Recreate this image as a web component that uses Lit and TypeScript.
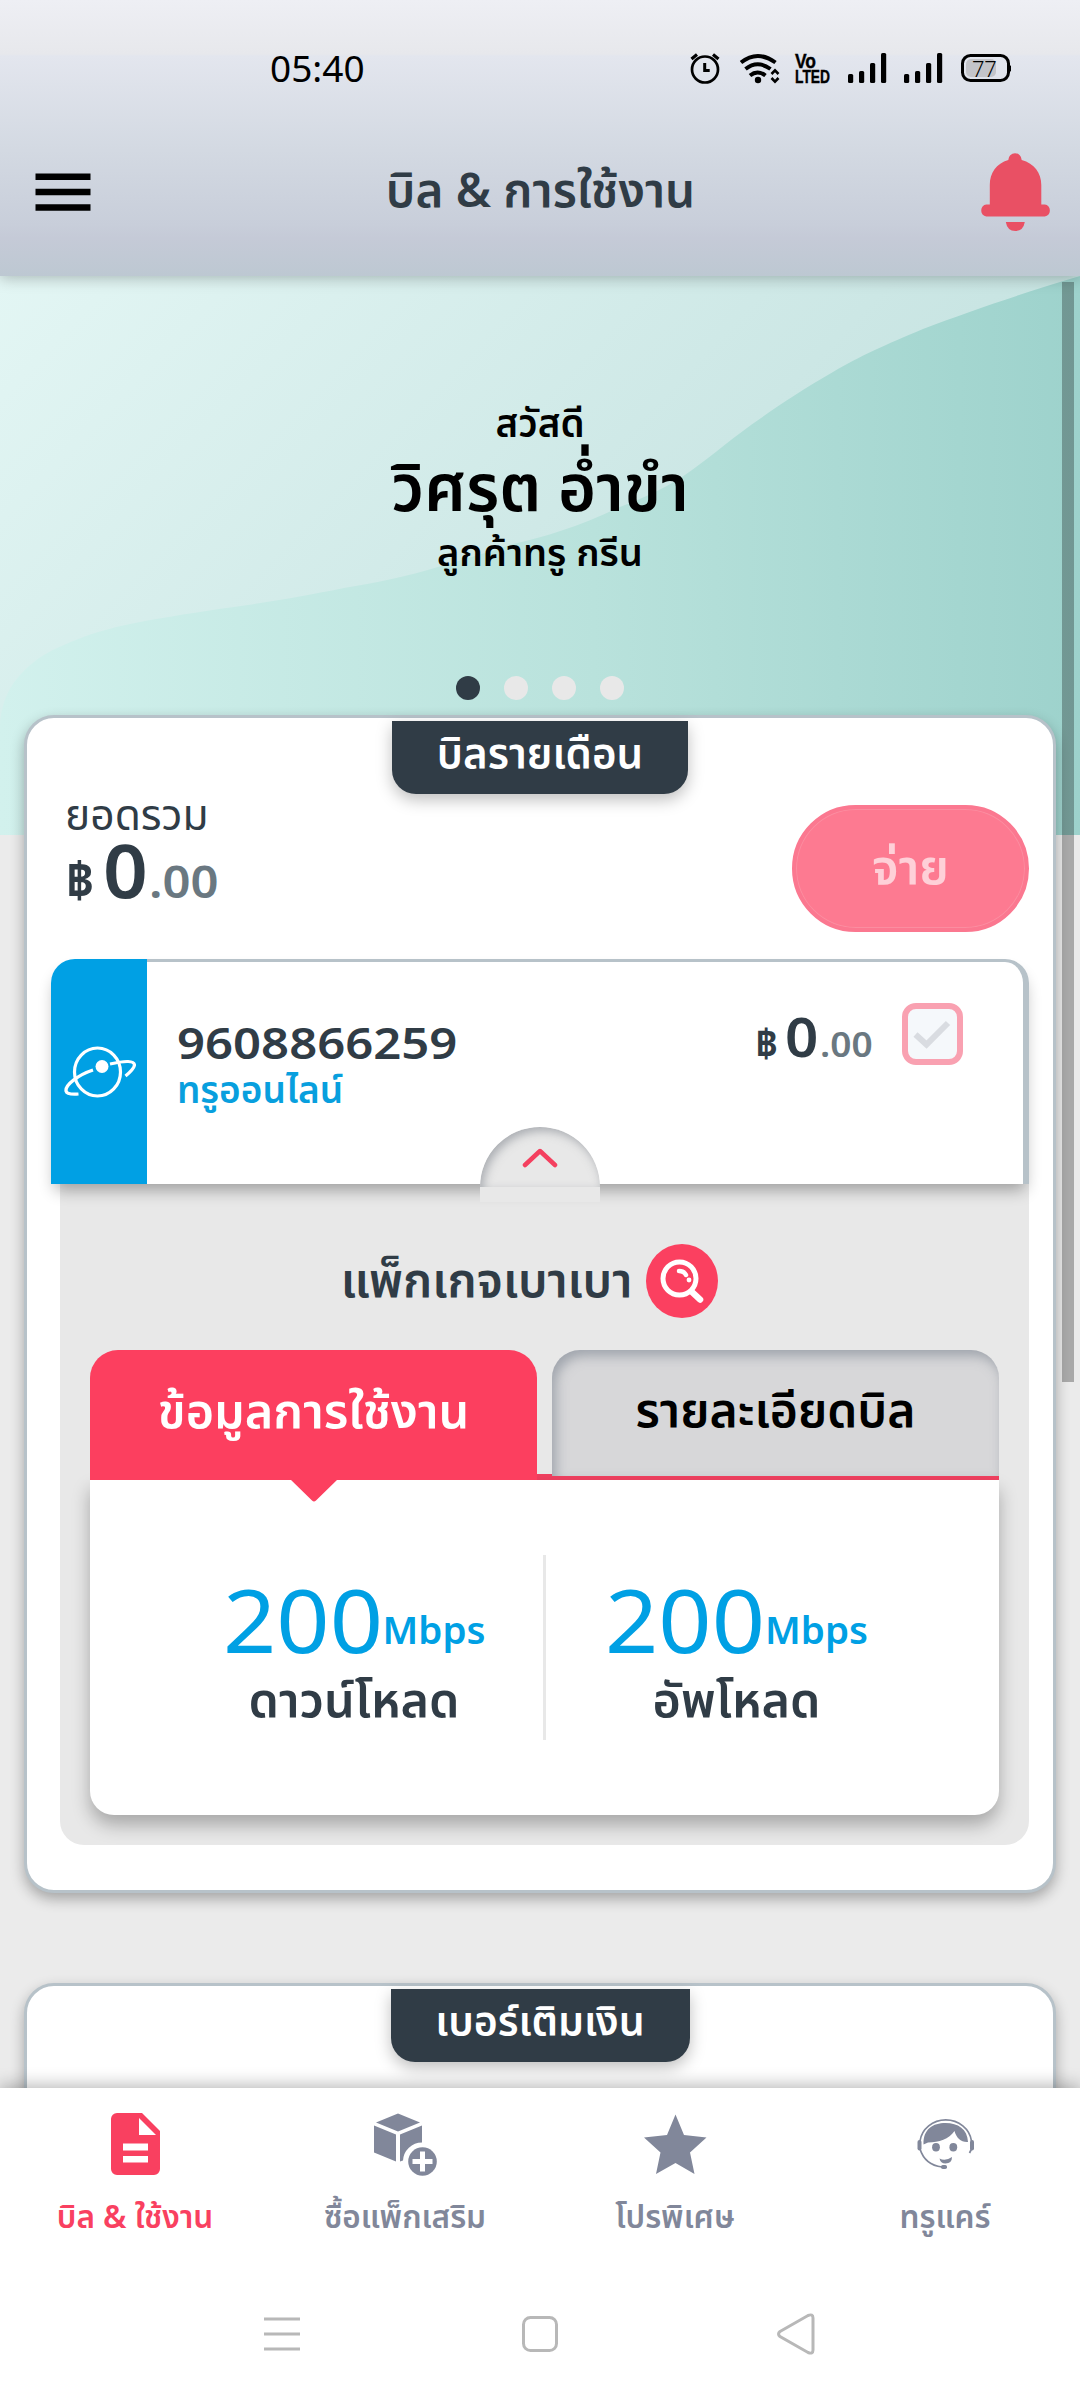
import { LitElement, html, css, svg } from "lit";
import { customElement, property } from "lit/decorators.js";
import { classMap } from "lit/directives/class-map.js";

const NAV = [
  { icon: "bill", label: "บิล & ใช้งาน" },
  { icon: "box", label: "ซื้อแพ็กเสริม" },
  { icon: "star", label: "โปรพิเศษ" },
  { icon: "care", label: "ทรูแคร์" },
];

const SPEEDS = [
  { value: "200", unit: "Mbps", label: "ดาวน์โหลด" },
  { value: "200", unit: "Mbps", label: "อัพโหลด" },
];

const ICONS: Record<string, unknown> = {
  bill: svg`<path fill="currentColor" fill-rule="evenodd" d="M14 1h25l18 18v38a6 6 0 0 1-6 6H14a6 6 0 0 1-6-6V7a6 6 0 0 1 6-6zM36 6v17h17zM20 31.500v7h25v-7zM20 44v6.500h25V44z"/>`,
  box: svg`<g fill="currentColor"><path d="M25 1.500 47 10.500 25 19.500 3 10.500z"/><path d="M1 13.500 23 22.500V49.500L1 40.500z"/><path d="M27 22.500 49 13.500V30.500A19 19 0 0 0 30 48.500L27 49.500z"/><circle cx="49.500" cy="49.500" r="14.300"/></g><path d="M49.500 39.500v20M39.500 49.500h20" stroke="#fff" stroke-width="5"/>`,
  star: svg`<path fill="currentColor" d="M32.500 2.500 41 23 63.500 25.500 47 40.500 51.500 62 32.500 51 13 62 17.500 40.500 1 25.500 24 23z"/>`,
  care: svg`<g fill="currentColor"><path d="M10.500 32.500C10 17 20 11 32.500 11S54.500 17 55 30C48 30.500 43.500 26 41.500 19 36 27 26 30.500 15 30.500z"/><ellipse cx="23" cy="35.300" rx="3.900" ry="4.200"/><ellipse cx="40.300" cy="35.300" rx="3.900" ry="4.200"/><path d="M26.500 46.500q6 3 12.500-1.500 0 6.500-6.500 6.500-5 0-6-5z"/><rect x="4.500" y="28" width="4" height="10.500" rx="2"/><rect x="57" y="28" width="4" height="10.500" rx="2"/><rect x="28" y="53" width="6" height="4" rx="1.800"/></g><path d="M58.500 29A26 24.500 0 0 0 7 29M7 37Q12 53 29 55M58.500 37l-2 4" fill="none" stroke="currentColor" stroke-width="1.700"/>`,
};

@customElement("section-badge")
class SectionBadge extends LitElement {
  static styles = css`
    :host { display: block; width: 296px; height: 73px; border-radius: 0 0 24px 24px; background: #303c46; color: #fff; font-size: 42px; font-weight: 600; line-height: 62px; white-space: nowrap; text-align: center; box-shadow: 0 6px 16px rgba(0, 0, 0, 0.25); }
    :host(.wide) { width: 299px; font-size: 41px; }
  `;
  render() {
    return html`<slot></slot>`;
  }
}

@customElement("nav-item")
class NavItem extends LitElement {
  @property() icon = "bill";
  static styles = css`
    :host { display: flex; flex-direction: column; align-items: center; gap: 18px; padding-top: 24px; width: 270px; color: #81879a; font-size: 31.5px; line-height: 44px; font-weight: 600; white-space: nowrap; }
    :host(.active) { color: #f94060; }
    svg { width: 64px; height: 64px; display: block; }
  `;
  render() {
    return html`<svg viewBox="0 0 64 64">${ICONS[this.icon]}</svg><span><slot></slot></span>`;
  }
}

@customElement("app-root")
class AppRoot extends LitElement {
  static styles = css`
    :host { display: flex; flex-direction: column; width: 1080px; height: 2400px; overflow: hidden; background: #fff; color: #303c46; font-family: "Noto Sans", "Noto Sans Thai", "Open Sans", sans-serif; font-weight: 600; }
    * { box-sizing: border-box; }
    svg { display: block; flex: none; }
    .header { height: 276px; position: relative; z-index: 2; flex: none; background: linear-gradient(#eeeff4 0, #e7e8ec 54px, #e3e6ee 56px, #d3d9e2 150px, #c8ceda 225px, #c5cad7 238px, #bdc8d2 276px); box-shadow: 0 2px 14px rgba(0, 0, 0, 0.25); }
    .status { height: 108px; display: flex; align-items: center; padding: 30px 69px 0 270px; }
    .time { flex: 1; color: #000; font-weight: 400; font-size: 37px; line-height: 40px; margin-top: -2px; }
    .bar { height: 168px; display: flex; align-items: center; justify-content: space-between; padding: 0 30px 0 35px; }
    .bar-side { width: 66px; }
    .title { font-size: 47.5px; line-height: 60px; margin-top: -6px; white-space: nowrap; }
    .scroll { position: relative; flex: none; height: 1812px; overflow: hidden; background: #ebebeb; display: flex; flex-direction: column; }
    .hero-bg { position: absolute; left: 0; top: 0; }
    .scrollbar { position: absolute; left: 1062px; top: 6px; width: 12px; height: 1100px; background: rgba(0, 0, 0, 0.28); z-index: 3; }
    .hero { position: relative; height: 439px; padding-top: 118px; display: flex; flex-direction: column; align-items: center; color: #000; white-space: nowrap; flex: none; }
    .hello { font-size: 38.5px; line-height: 56px; }
    .name { font-size: 65px; line-height: 72px; height: 74px; }
    .tier { font-size: 38px; line-height: 55px; }
    .dots { display: flex; gap: 24px; margin-top: 97px; }
    .dot { width: 24px; height: 24px; border-radius: 50%; background: #e8e8e8; }
    .dot.on { background: #303c46; }
    .card { position: relative; flex: none; margin: 0 24px; border: 3px solid #b7c2c9; border-radius: 30px; background: #fff; padding: 3px 24px 45px; box-shadow: 0 6px 14px rgba(0, 0, 0, 0.3); display: flex; flex-direction: column; }
    .card section-badge { align-self: center; }
    .next { margin-top: 90px; height: 400px; }
    .summary { display: flex; justify-content: space-between; height: 165px; padding-left: 14px; }
    .total-label { font-size: 42.5px; line-height: 44px; margin-top: -2px; font-weight: 400; }
    .total { line-height: 67px; white-space: nowrap; display: flex; align-items: baseline; padding-left: 1px; }
    .baht { font-size: 49px; font-weight: 700; }
    .int { font-size: 74px; font-weight: 600; margin-left: 9px; transform: scaleX(1.06); transform-origin: 0 50%; margin-right: 3px; }
    .dec { font-size: 45px; font-weight: 600; color: #6a7881; transform: scaleX(1.09); transform-origin: 0 50%; }
    .pay { width: 237px; height: 127px; margin-top: 11px; border-radius: 64px; background: #fd7a91; color: #fed0d8; border: 4px solid #fb7890; box-shadow: inset 0 0 0 1px #fb8da0; font-size: 48.5px; line-height: 112px; text-align: center; }
    .account { position: relative; z-index: 1; display: flex; height: 225px; background: #fff; border-radius: 24px 24px 0 0; box-shadow: 0 10px 16px -4px rgba(0, 0, 0, 0.32); }
    .brand { width: 96px; background: #00a0e4; border-radius: 24px 0 0 0; display: flex; align-items: center; justify-content: center; padding-left: 2px; }
    .acc-body { flex: 1; display: flex; justify-content: space-between; border-top: 3px solid #b7c2c9; border-right: 6px solid #b7c2c9; border-radius: 0 24px 0 0; padding: 0 60px 0 30px; }
    .acc-text { padding-top: 56px; }
    .number { font-size: 43px; line-height: 50px; transform: scaleX(1.14); transform-origin: 0 50%; }
    .product { font-size: 37px; line-height: 41px; color: #089fde; }
    .acc-pay { display: flex; padding-top: 41px; gap: 31px; }
    .acc-amount { display: flex; align-items: baseline; line-height: 65px; height: 66px; white-space: nowrap; }
    .acc-amount .baht { font-size: 39px; }
    .acc-amount .int { font-size: 55px; margin-left: 7px; }
    .acc-amount .dec { font-size: 34px; margin-right: 3px; }
    .check { width: 61px; height: 62px; border: 6px solid #f9a1b1; border-radius: 14px; background: #f5f8fb; }
    .notch { position: absolute; left: 429px; top: 168px; width: 120px; height: 75px; background: #e8e8e8; border-radius: 60px 60px 0 0; overflow: hidden; }
    .notch-in { height: 60px; border-radius: 60px 60px 0 0; box-shadow: inset 3px 4px 10px rgba(110, 115, 125, 0.5); padding: 19px 0 0 42px; clip-path: inset(0); }
    .panel { height: 661px; margin-left: 9px; background: #e8e8e8; border-radius: 0 0 24px 24px; padding: 60px 30px 0; }
    .pack { display: flex; height: 74px; align-items: center; justify-content: center; gap: 14px; padding-right: 30px; }
    .pack-name { font-size: 47.500px; line-height: 69px; height: 74px; white-space: nowrap; }
    .look { width: 72px; height: 74px; border-radius: 50%; background: #fb4060; }
    .tabs { display: grid; grid-template-columns: 447px 447px; gap: 15px; margin-top: 32px; height: 130px; background: linear-gradient(#f04060, #f04060) bottom / 100% 6px no-repeat; }
    .tab { position: relative; border-radius: 28px 28px 0 0; text-align: center; font-size: 48.5px; line-height: 118px; white-space: nowrap; }
    .tab.on { background: #fc3f5f; color: #fff; }
    .tab.off { height: 126px; background: #d7d7d9; color: #000; font-size: 48px; box-shadow: inset 4px 6px 12px rgba(105, 115, 130, 0.5); clip-path: inset(0); }
    .arrow { position: absolute; left: 200px; top: 129px; z-index: 2; }
    .usage { height: 335px; background: #fff; border-radius: 0 0 24px 24px; box-shadow: 0 10px 18px rgba(0, 0, 0, 0.28); padding: 75px 72px 0 75px; display: grid; grid-template-columns: 1fr 1fr; }
    .speed { height: 185px; padding-top: 19px; text-align: center; white-space: nowrap; }
    .speed:first-child { border-right: 3px solid #e8e8e8; }
    .rate { display: flex; justify-content: center; color: #00a0e4; line-height: 90px; height: 90px; }
    .value { font-size: 88px; font-weight: 400; transform: scaleX(1.06); transform-origin: 0 50%; margin-right: 9px; }
    .unit { font-size: 38.5px; line-height: 111px; }
    .speed-label { font-size: 48.5px; line-height: 68px; }
    .nav { position: relative; z-index: 2; height: 180px; flex: none; background: #fff; display: flex; box-shadow: 0 -3px 16px rgba(0, 0, 0, 0.28); }
    .sys { position: relative; z-index: 3; height: 132px; flex: none; background: #fff; display: flex; align-items: center; justify-content: center; gap: 217px; }
  `;

  private status() {
    return html`<svg width="322" height="36" viewBox="689 52 322 36">
      <g fill="none" stroke="#000">
        <circle cx="705" cy="70.500" r="13" stroke-width="2.700" />
        <path d="M704.700 64v7.600h5" stroke-width="3" />
        <path d="M691.500 60l5.500-4.500M718.500 60l-5.500-4.500" stroke-width="3.200" />
        <path d="M741 63.500Q757.500 50.500 775.500 63.500M745.500 70Q757.500 60.500 770.500 70M750 76.500Q757.500 70.500 765.500 76.500" stroke-width="4" />
        <path d="M771.500 75l3.500-3.700 3.500 3.700M771.500 79l3.500 3.700 3.500-3.700" stroke-width="2.600" />
        <rect x="962.500" y="56.500" width="46" height="25" rx="8" stroke-width="3" />
      </g>
      <circle cx="758" cy="81" r="3.200" />
      <g font-family="Liberation Sans" font-weight="700" fill="#000" stroke="#000" stroke-width=".400">
        <text x="795" y="69" font-size="20" textLength="21" lengthAdjust="spacingAndGlyphs">Vo</text>
        <text x="795" y="84" font-size="19" textLength="35" lengthAdjust="spacingAndGlyphs">LTED</text>
      </g>
      ${[0, 56].map((d) => [[848, 75], [859, 72], [870, 64], [881, 54]].map(([x, y]) => svg`<rect x=${x + d} y=${y} width="5.200" height=${84 - y} rx="1.600"/>`))}
      <rect x="966" y="60" width="30" height="18" rx="5" fill="#c3c4c9" />
      <path d="M1008 64.500l3 2.500v5l-3 2.500z" />
      <text x="984.500" y="77.500" text-anchor="middle" font-family="Roboto" font-size="22" font-weight="300">77</text>
    </svg>`;
  }

  render() {
    return html`
      <div class="header">
        <div class="status"><span class="time">05:40</span>${this.status()}</div>
        <div class="bar">
          <div class="bar-side"><svg width="56" height="40" viewBox="0 0 56 40"><path d="M.500 4.700h55M.500 20h55M.500 35.500h55" stroke="#000" stroke-width="6.500" /></svg></div>
          <div class="title">บิล & การใช้งาน</div>
          <svg width="70" height="80" viewBox="0 0 70 80" fill="#e95064"><path d="M28.300 8a6.700 6.700 0 0 1 13.400 0C54.300 11.500 61.300 21 61.300 33V52.500h3.500a5.500 5.500 0 0 1 5 6 5.500 5.500 0 0 1-5 6H6.300a5.500 5.500 0 0 1-5-6 5.500 5.500 0 0 1 5-6h3.500V33C9.800 21 16.300 11.500 28.300 8zM25.800 70h19q-1.500 9-9.500 9t-9.500-9z" /></svg>
        </div>
      </div>
      <div class="scroll">
        <svg class="hero-bg" width="1080" height="559" viewBox="0 276 1080 559">
          <defs>
            <linearGradient id="a" x1="0" y1="0" x2="1" y2=".5"><stop offset="0" stop-color="#e3f6f4" /><stop offset=".75" stop-color="#c9e5e3" /><stop offset="1" stop-color="#bfe1dc" /></linearGradient>
            <linearGradient id="b"><stop offset="0" stop-color="#d2f1ed" /><stop offset=".55" stop-color="#b9e2dc" /><stop offset="1" stop-color="#9dd2cc" /></linearGradient>
          </defs>
          <path fill="url(#a)" d="M0 276h1080v559H0z" />
          <path fill="url(#b)" d="M1080 276C1020 294 970 311 923 329C885 345 860 356 833 372C800 391 775 408 751 425C725 444 708 459 682 477C660 491 640 499 620 507C580 526 545 537 513 544C490 552 465 559 441 566C405 577 375 583 344 588C310 595 280 600 248 605C210 610 180 615 145 621C118 626 95 632 76 640C58 647 45 653 34 662C18 675 2 692 0 725V835h1080z" />
        </svg>
        <div class="scrollbar"></div>
        <div class="hero">
          <div class="hello">สวัสดี</div>
          <div class="name">วิศรุต อ่ำขำ</div>
          <div class="tier">ลูกค้าทรู กรีน</div>
          <div class="dots">${[0, 1, 2, 3].map((i) => html`<span class=${classMap({ dot: true, on: i === 0 })}></span>`)}</div>
        </div>
        <div class="card">
          <section-badge>บิลรายเดือน</section-badge>
          <div class="summary">
            <div>
              <div class="total-label">ยอดรวม</div>
              <div class="total"><span class="baht">฿</span><span class="int">0</span><span class="dec">.00</span></div>
            </div>
            <div class="pay">จ่าย</div>
          </div>
          <div class="account">
            <div class="brand">
              <svg width="72" height="52" viewBox="0 0 72 52" fill="none" stroke="#fff" stroke-width="3.200"><ellipse cx="33.500" cy="26" rx="23" ry="24" /><path d="M29 24C14 29 1 39 2 45Q3 49 14.500 48M46 18Q70 12.500 70.500 19 70 23 61.500 30" /><circle cx="38" cy="20.500" r="6.500" fill="#fff" stroke="none" /></svg>
            </div>
            <div class="acc-body">
              <div class="acc-text"><div class="number">9608866259</div><div class="product">ทรูออนไลน์</div></div>
              <div class="acc-pay">
                <div class="acc-amount"><span class="baht">฿</span><span class="int">0</span><span class="dec">.00</span></div>
                <div class="check"><svg width="49" height="50" viewBox="0 0 49 50"><path d="M7.500 25.500 18.500 35.500 40 14" fill="none" stroke="#d9dce1" stroke-width="6" /></svg></div>
              </div>
            </div>
            <div class="notch"><div class="notch-in"><svg width="36" height="24" viewBox="0 0 36 24"><path d="M3 19 18 5 33 19" fill="none" stroke="#f4405f" stroke-width="4.500" stroke-linecap="round" stroke-linejoin="round" /></svg></div></div>
          </div>
          <div class="panel">
            <div class="pack"><span class="pack-name">แพ็กเกจเบาเบา</span>
              <svg class="look" viewBox="0 0 72 74" fill="none" stroke="#fff" stroke-linecap="round"><circle cx="33.500" cy="34.500" r="16.500" stroke-width="5" /><path d="M46 48 54 55.500" stroke-width="6.500" /><path d="M33 27Q38 27 40 31" stroke-width="4.500" /><circle cx="43" cy="36" r="2.400" fill="#fff" stroke="none" /></svg>
            </div>
            <div class="tabs">
              <div class="tab on">ข้อมูลการใช้งาน<svg class="arrow" width="48" height="24" viewBox="0 0 48 24"><path d="M0 0h48L26 21.500q-2 2-4 0z" fill="#fc3f5f" /></svg></div>
              <div class="tab off">รายละเอียดบิล</div>
            </div>
            <div class="usage">
              ${SPEEDS.map((s) => html`<div class="speed"><div class="rate"><span class="value">${s.value}</span><span class="unit">${s.unit}</span></div><div class="speed-label">${s.label}</div></div>`)}
            </div>
          </div>
        </div>
        <div class="card next"><section-badge class="wide">เบอร์เติมเงิน</section-badge></div>
      </div>
      <div class="nav">${NAV.map((n, i) => html`<nav-item class=${classMap({ active: i === 0 })} .icon=${n.icon}>${n.label}</nav-item>`)}</div>
      <div class="sys">
        <svg width="40" height="40" viewBox="0 0 40 40" stroke="#b8b8b8" stroke-width="3"><path d="M1 5h36M1 20h36M1 35h36" /></svg>
        <svg width="40" height="40" viewBox="0 0 40 40" fill="none" stroke="#b8b8b8" stroke-width="3"><rect x="3.500" y="3.500" width="33" height="33" rx="7" /></svg>
        <svg width="40" height="42" viewBox="0 0 40 42" fill="none" stroke="#b8b8b8" stroke-width="3"><path d="M3 18.500 31 2.500Q36 .500 36 5V37Q36 41.500 31 39.500L3 23.500Q0 21 3 18.500z" /></svg>
      </div>`;
  }
}
